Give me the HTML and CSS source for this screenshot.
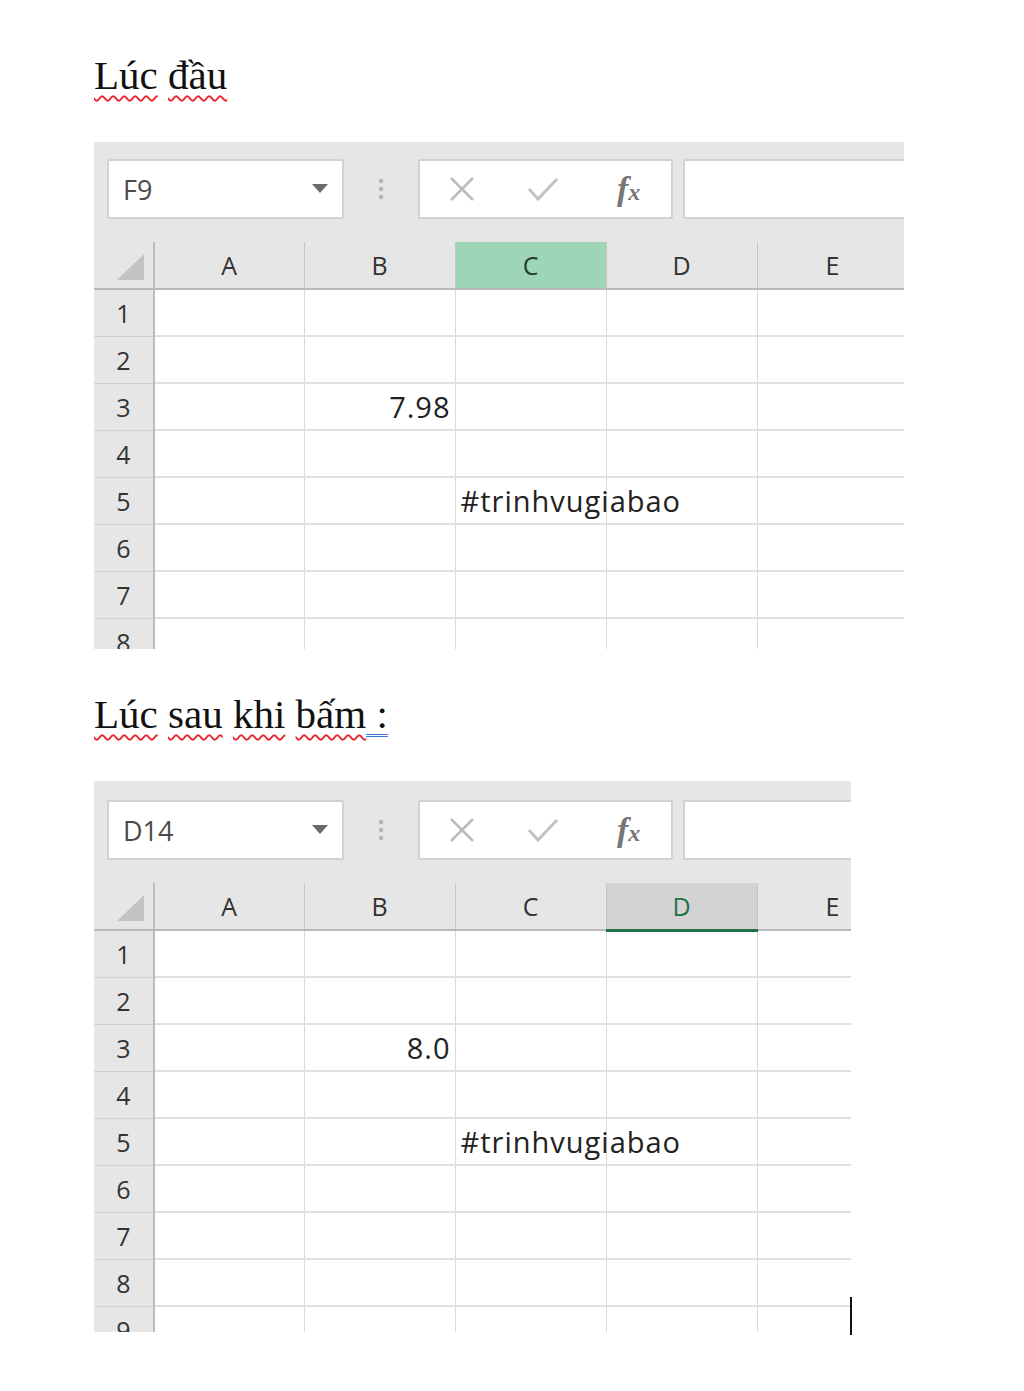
FILE: index.html
```html
<!DOCTYPE html>
<html lang="vi">

<head>
    <meta charset="utf-8">
    <title>Lúc đầu / Lúc sau</title>
    <link rel="stylesheet" href="styles.css">
</head>

<body>
    <p class="caption"><span class="typo">Lúc</span> <span class="typo">đầu</span></p>

    <!-- Before -->
    <div class="sheet-wrap">
        <div class="sheet sheet-wide">
            <div class="toolbar">
                <div class="namebox">
                    <span>F9</span>
                    <svg class="caret" width="16" height="9" viewBox="0 0 16 9"><polygon points="0,0 16,0 8,9" fill="#6b6b6b"/></svg>
                </div>
                <div class="grip">
                    <svg width="6" height="22" viewBox="0 0 6 22"><circle cx="3" cy="3" r="2.2" fill="#b4b4b4"/><circle cx="3" cy="11" r="2.2" fill="#b4b4b4"/><circle cx="3" cy="19" r="2.2" fill="#b4b4b4"/></svg>
                </div>
                <div class="fxbox">
                    <svg width="26" height="26" viewBox="0 0 26 26"><path d="M2 2 L24 24 M24 2 L2 24" stroke="#bcbcbc" stroke-width="2.6" fill="none"/></svg>
                    <svg width="32" height="26" viewBox="0 0 32 26"><path d="M2 13 L11 23 L30 3" stroke="#c2c2c2" stroke-width="3" fill="none"/></svg>
                    <span class="fx">f<small>x</small></span>
                </div>
                <div class="formula"></div>
            </div>
            <table class="grid">
                <colgroup>
                    <col class="c-head"><col class="c-a"><col class="c-std"><col class="c-std"><col class="c-std"><col class="c-std">
                </colgroup>
                <tr class="heads">
                    <th class="corner"><svg width="27" height="26" viewBox="0 0 27 26"><polygon points="27,0 27,26 0,26" fill="#c3c3c3"/></svg></th>
                    <th>A</th><th>B</th><th class="picked">C</th><th>D</th><th>E</th>
                </tr>
                <tr><th>1</th><td></td><td></td><td></td><td></td><td></td></tr>
                <tr><th>2</th><td></td><td></td><td></td><td></td><td></td></tr>
                <tr><th>3</th><td></td><td class="num">7.98</td><td></td><td></td><td></td></tr>
                <tr><th>4</th><td></td><td></td><td></td><td></td><td></td></tr>
                <tr><th>5</th><td></td><td></td><td class="spill">#trinhvugiabao</td><td></td><td></td></tr>
                <tr><th>6</th><td></td><td></td><td></td><td></td><td></td></tr>
                <tr><th>7</th><td></td><td></td><td></td><td></td><td></td></tr>
                <tr><th>8</th><td></td><td></td><td></td><td></td><td></td></tr>
            </table>
        </div>
    </div>

    <p class="caption"><span class="typo">Lúc</span> <span class="typo">sau</span> <span class="typo">khi</span> <span class="typo">bấm</span><span class="grammar"> :</span></p>

    <!-- After -->
    <div class="sheet-wrap">
        <div class="sheet sheet-narrow">
            <div class="toolbar">
                <div class="namebox">
                    <span>D14</span>
                    <svg class="caret" width="16" height="9" viewBox="0 0 16 9"><polygon points="0,0 16,0 8,9" fill="#6b6b6b"/></svg>
                </div>
                <div class="grip">
                    <svg width="6" height="22" viewBox="0 0 6 22"><circle cx="3" cy="3" r="2.2" fill="#b4b4b4"/><circle cx="3" cy="11" r="2.2" fill="#b4b4b4"/><circle cx="3" cy="19" r="2.2" fill="#b4b4b4"/></svg>
                </div>
                <div class="fxbox">
                    <svg width="26" height="26" viewBox="0 0 26 26"><path d="M2 2 L24 24 M24 2 L2 24" stroke="#bcbcbc" stroke-width="2.6" fill="none"/></svg>
                    <svg width="32" height="26" viewBox="0 0 32 26"><path d="M2 13 L11 23 L30 3" stroke="#c2c2c2" stroke-width="3" fill="none"/></svg>
                    <span class="fx">f<small>x</small></span>
                </div>
                <div class="formula"></div>
            </div>
            <table class="grid">
                <colgroup>
                    <col class="c-head"><col class="c-a"><col class="c-std"><col class="c-std"><col class="c-std"><col class="c-std">
                </colgroup>
                <tr class="heads">
                    <th class="corner"><svg width="27" height="26" viewBox="0 0 27 26"><polygon points="27,0 27,26 0,26" fill="#c3c3c3"/></svg></th>
                    <th>A</th><th>B</th><th>C</th><th class="active">D</th><th>E</th>
                </tr>
                <tr><th>1</th><td></td><td></td><td></td><td></td><td></td></tr>
                <tr><th>2</th><td></td><td></td><td></td><td></td><td></td></tr>
                <tr><th>3</th><td></td><td class="num">8.0</td><td></td><td></td><td></td></tr>
                <tr><th>4</th><td></td><td></td><td></td><td></td><td></td></tr>
                <tr><th>5</th><td></td><td></td><td class="spill">#trinhvugiabao</td><td></td><td></td></tr>
                <tr><th>6</th><td></td><td></td><td></td><td></td><td></td></tr>
                <tr><th>7</th><td></td><td></td><td></td><td></td><td></td></tr>
                <tr><th>8</th><td></td><td></td><td></td><td></td><td></td></tr>
                <tr><th>9</th><td></td><td></td><td></td><td></td><td></td></tr>
            </table>
        </div>
        <span class="cursor"></span>
    </div>
</body>

</html>
```

FILE: styles.css
```css
body {
    margin: 0;
    padding: 52px 0 0 94px;
    background-color: #fff;
    color: #222;
}

/* Word text above each screenshot */
.caption {
    margin: 0 0 44px;
    font-family: "Liberation Serif", serif;
    font-size: 41px;
    line-height: 46px;
    color: #111;
}

.typo {
    text-decoration: underline wavy #e8262c;
    text-decoration-thickness: 2px;
    text-underline-offset: 6px;
}

.grammar {
    text-decoration: underline double #3b6fd6;
    text-decoration-thickness: 1px;
    text-underline-offset: 6px;
}

.sheet-wrap {
    position: relative;
    margin-bottom: 42px;
}

.sheet {
    overflow: hidden;
    background-color: #fff;
    font-family: "Open Sans", sans-serif;
}

.sheet-wide {
    width: 810px;
    height: 507px;
}

.sheet-narrow {
    width: 757px;
    height: 551px;
}

/* Name box + formula bar */
.toolbar {
    display: flex;
    align-items: flex-start;
    height: 100px;
    padding: 17px 0 0 13px;
    box-sizing: border-box;
    background-color: #e6e6e6;
}

.sheet-narrow .toolbar {
    height: 102px;
    padding-top: 19px;
}

.namebox,
.fxbox,
.formula {
    height: 60px;
    box-sizing: border-box;
    background-color: #fff;
    border: 2px solid #d2d2d2;
    border-radius: 2px;
}

.namebox {
    display: flex;
    align-items: center;
    justify-content: space-between;
    width: 237px;
    padding: 0 14px 0 14px;
    font-size: 27px;
    color: #4a4a4a;
}

.caret {
    margin-top: -2px;
}

.grip {
    display: flex;
    justify-content: center;
    width: 74px;
    padding-top: 19px;
}

.fxbox {
    display: flex;
    align-items: center;
    width: 255px;
    padding-left: 29px;
    gap: 52px;
}

.fx {
    margin-left: 6px;
    font-family: "Liberation Serif", serif;
    font-style: italic;
    font-weight: bold;
    font-size: 34px;
    color: #777;
}

.fx small {
    font-size: 24px;
}

.formula {
    flex: 1;
    margin-left: 10px;
    margin-right: -10px;
}

/* Cells */
.grid {
    border-collapse: collapse;
    table-layout: fixed;
    width: 814px;
}

.c-head {
    width: 60px;
}

.c-a {
    width: 150px;
}

.c-std {
    width: 151px;
}

.grid tr {
    height: 47px;
}

.grid th {
    padding: 0;
    background-color: #e6e6e6;
    font-weight: normal;
    font-size: 25px;
    color: #333;
    border-bottom: 1px solid #d0d0d0;
    border-right: 2px solid #bdbdbd;
    text-align: center;
}

.heads th {
    border-bottom: 2px solid #b9b9b9;
    border-right: 1px solid #c6c6c6;
}

.heads .corner {
    border-right: 2px solid #bdbdbd;
    text-align: right;
    vertical-align: bottom;
    padding: 0 9px 8px 0;
    line-height: 0;
}

.heads .picked {
    background-color: #9fd5b7;
    color: #1f3d2b;
}

.heads .active {
    background-color: #d3d3d3;
    color: #217346;
    border-bottom: 3px solid #217346;
}

.grid td {
    padding: 0 5px;
    border-right: 1px solid #d9d9d9;
    border-bottom: 2px solid #e0e0e0;
    font-size: 29px;
    letter-spacing: 1px;
    color: #222;
    white-space: nowrap;
}

.grid .num {
    text-align: right;
    padding-right: 4px;
}

.grid .spill {
    overflow: visible;
}

/* Word text cursor */
.cursor {
    position: absolute;
    left: 756px;
    top: 516px;
    width: 2px;
    height: 38px;
    background-color: #111;
}
```
